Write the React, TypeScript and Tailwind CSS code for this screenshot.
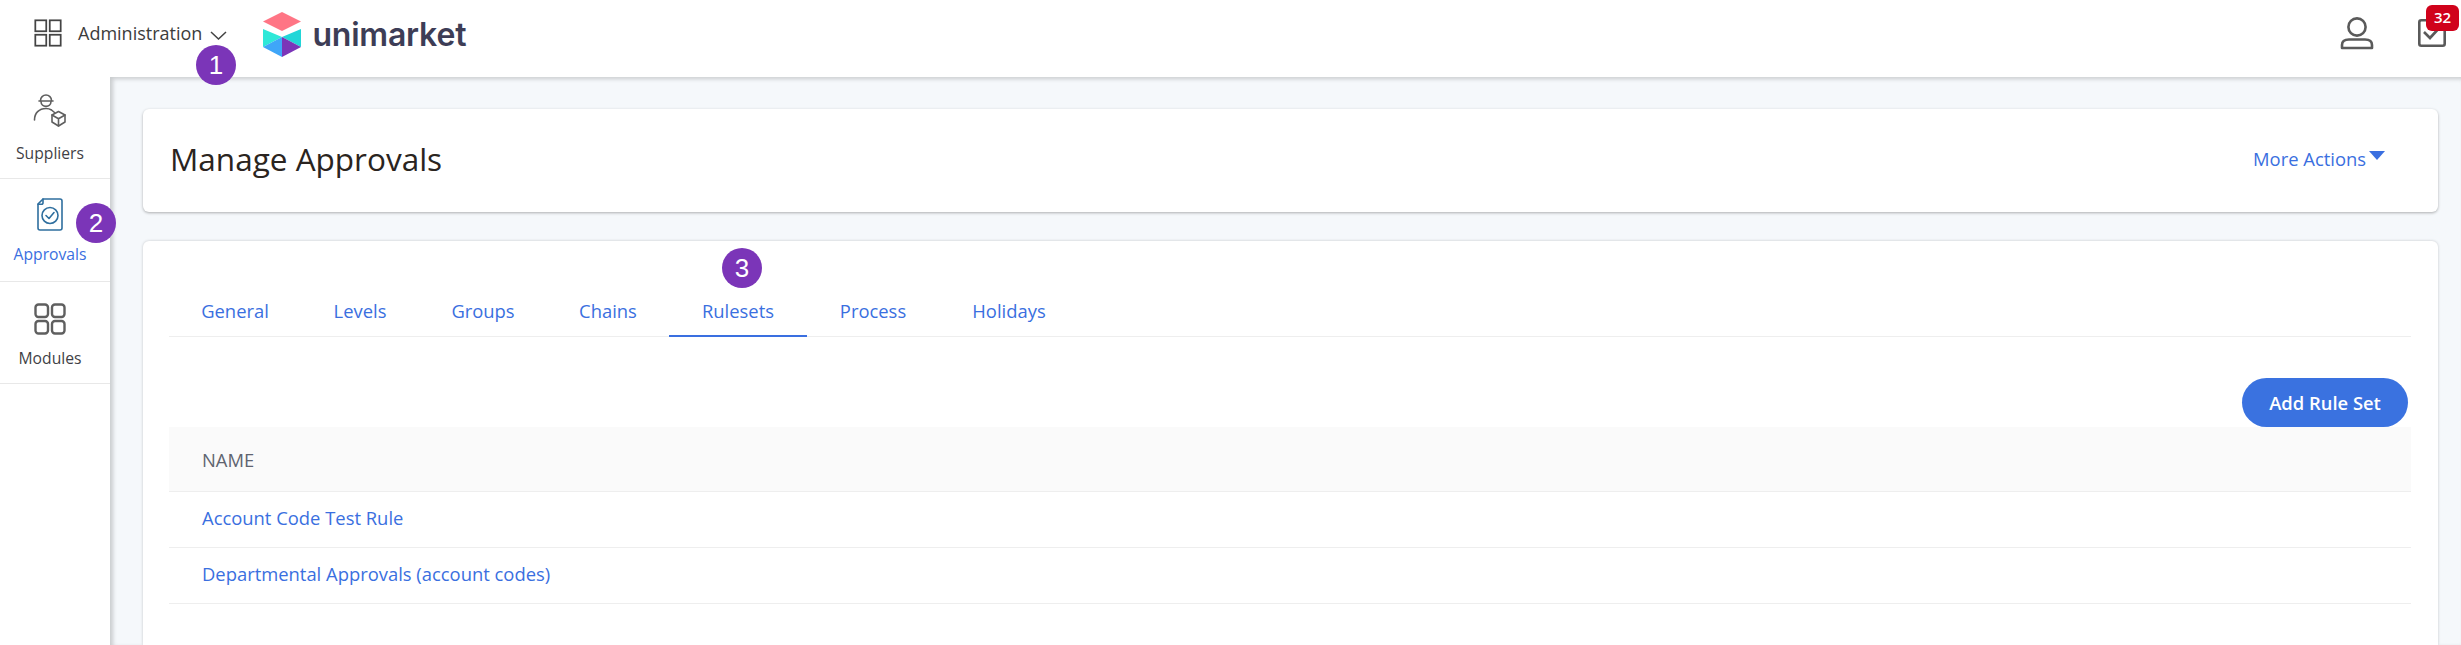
const F = "font-['Open_Sans','Lato',sans-serif]";

function Step({ n, className }: { n: string; className: string }) {
  return (
    <div className={`absolute z-20 flex h-10 w-10 items-center justify-center rounded-full bg-[#7b35b8] font-['Liberation_Sans',sans-serif] text-[26px] leading-none text-white ${className}`}>
      {n}
    </div>
  );
}

function GridIcon({ size, stroke, sw, r }: { size: number; stroke: string; sw: number; r: number }) {
  return (
    <svg width={size} height={size} viewBox="0 0 32 32" fill="none" stroke={stroke} strokeWidth={sw}>
      <rect x="1.5" y="1.5" width="12.5" height="12.5" rx={r} />
      <rect x="18" y="1.5" width="12.5" height="12.5" rx={r} />
      <rect x="1.5" y="18" width="12.5" height="12.5" rx={r} />
      <rect x="18" y="18" width="12.5" height="12.5" rx={r} />
    </svg>
  );
}

function Logo() {
  return (
    <svg width="38" height="45" viewBox="0 0 38 45">
      <path d="M19 0 L38 9.5 L19 19 L0 9.5Z" fill="#ff7585" />
      <path d="M0 17 L19 25 L0 35Z" fill="#2ee8d8" />
      <path d="M38 17 L19 25 L38 35Z" fill="#22d6d8" />
      <path d="M0 35 L19 25 L19 45Z" fill="#3fa6f8" />
      <path d="M38 35 L19 25 L19 45Z" fill="#7b35b8" />
    </svg>
  );
}

function SupplierIcon() {
  return (
    <svg width="34" height="34" viewBox="0 0 34 34" fill="none" stroke="#5f5f5f" strokeWidth="1.6" strokeLinejoin="round" strokeLinecap="round">
      <path d="M7.5 6.5 a5.5 5.5 0 0 1 11 0" />
      <path d="M6 7 H20" />
      <path d="M8 7.5 C8 14 18 14 18 7.5" />
      <path d="M1.5 26 C1.5 19 6 14.5 13 14.5 C15 14.5 17 15 18.5 16 L21.5 18.5" />
      <path d="M25.5 17.5 L32 21 V28 L25.5 32 L19 28 V21Z" />
      <path d="M19 21 L25.5 24.7 L32 21 M25.5 24.7 V32" />
    </svg>
  );
}

function ApprovalIcon() {
  return (
    <svg width="26" height="33" viewBox="0 0 26 33" fill="none" stroke="#2f6f9f" strokeWidth="1.6" strokeLinejoin="round" strokeLinecap="round">
      <path d="M6 1 H23 a2 2 0 0 1 2 2 V30 a2 2 0 0 1 -2 2 H3 a2 2 0 0 1 -2 -2 V6Z" />
      <path d="M6 1 V5 a1.2 1.2 0 0 1 -1.2 1.2 H1" />
      <circle cx="13" cy="17.5" r="8" />
      <path d="M9 17.5 L12 20.5 L17 14.5" />
    </svg>
  );
}

function SideItem({ label, icon, active, h, gap }: { label: string; icon: React.ReactNode; active?: boolean; h: string; gap: string }) {
  return (
    <div className={`flex flex-col items-center border-b border-[#e8e8e8] pr-[10px] ${h}`}>
      <div className="flex h-[34px] items-center justify-center">{icon}</div>
      <div className={`${gap} text-[15.7px] leading-[20px] ${active ? "text-[#3a6fe0]" : "text-[#3f3f46]"}`}>{label}</div>
    </div>
  );
}

const tabs: [string, string][] = [
  ["General", "w-[132px]"],
  ["Levels", "w-[118px]"],
  ["Groups", "w-[128px]"],
  ["Chains", "w-[122px]"],
  ["Rulesets", "w-[138px]"],
  ["Process", "w-[132px]"],
  ["Holidays", "w-[140px]"],
];

export default function App() {
  return (
    <div className={`relative flex h-[645px] w-full flex-col overflow-hidden bg-white ${F}`}>
      <header className="flex h-[77px] shrink-0 items-center pl-[34px] pr-[15px]">
        <div className="mb-[11px] flex items-center">
          <GridIcon size={28} stroke="#444444" sw={2} r={0} />
          <span className="ml-[16px] text-[18px] leading-6 text-[#3c3c3c]">Administration</span>
          <svg className="ml-[8px] mt-[4px]" width="17" height="9" viewBox="0 0 17 9" fill="none" stroke="#444444" strokeWidth="1.5">
            <path d="M1 1 L8.5 8 L16 1" />
          </svg>
        </div>
        <div className="mb-[8px] ml-[36px] flex items-center">
          <Logo />
          <span className="ml-[11px] font-['Inter',sans-serif] text-[32px] font-semibold leading-none tracking-[-0.2px] text-[#3d3d56]">unimarket</span>
        </div>
        <div className="ml-auto mb-[12px] flex items-center">
          <svg width="34" height="34" viewBox="0 0 34 34" fill="none" stroke="#5a5a5a" strokeWidth="2.6">
            <circle cx="17" cy="11" r="8.6" />
            <path d="M2 32 V29 C2 25 5 23.5 9 23.5 H25 C29 23.5 32 25 32 29 V32 H2Z" strokeLinejoin="round" />
          </svg>
          <div className="relative ml-[44px] h-[28px] w-[28px]">
            <svg width="28" height="28" viewBox="0 0 28 28" fill="none" stroke="#5a5a5a" strokeWidth="2.6">
              <rect x="1.3" y="1.3" width="25.4" height="25.4" rx="2" />
              <path d="M6 13 L12 19 L23 7" />
            </svg>
            <div className="absolute left-[8px] top-[-14px] flex h-[26px] w-[33px] items-center justify-center rounded-[6px] bg-[#d0021b] text-[15px] font-semibold leading-none text-white">32</div>
          </div>
        </div>
      </header>

      <div className="flex min-h-0 flex-1">
        <aside className="w-[110px] shrink-0 bg-white">
          <SideItem label="Suppliers" h="h-[102px] pt-[17px]" gap="mt-[15px]" icon={<SupplierIcon />} />
          <SideItem label="Approvals" h="h-[103px] pt-[18px]" gap="mt-[13px]" active icon={<ApprovalIcon />} />
          <SideItem label="Modules" h="h-[102px] pt-[20px]" gap="mt-[12px]" icon={<GridIcon size={32} stroke="#5f5f5f" sw={2.4} r={3} />} />
        </aside>

        <main className="flex min-w-0 flex-1 flex-col bg-[#f5f8fb] pl-[33px] pr-[23px] pt-[32px] shadow-[inset_3px_2px_4px_rgba(0,0,0,0.18)]">
          <section className="flex h-[103px] shrink-0 items-center justify-between rounded-[6px] bg-white pl-[27px] pr-[53px] shadow-[0_1px_3px_rgba(0,0,0,0.3)]">
            <h1 className="mb-[3px] text-[31.5px] font-normal leading-none text-[#2a2420]">Manage Approvals</h1>
            <div className="mb-[4px] flex items-center text-[18.4px] text-[#3a6fe0]">
              More Actions
              <svg className="mb-[6px] ml-[3px]" width="16" height="9" viewBox="0 0 16 9">
                <path d="M0 0 H16 L8 9Z" fill="#3a6fe0" />
              </svg>
            </div>
          </section>

          <section className="mt-[29px] flex-1 rounded-t-[6px] bg-white pl-[26px] pr-[27px] pt-[44px] shadow-[0_0_3px_rgba(0,0,0,0.2)]">
            <nav className="flex h-[52px] border-b border-[#eeeeee]">
              {tabs.map(([t, w]) => (
                <div key={t} className={`${w} h-[52px] pt-[14px] text-center text-[18.4px] leading-6 text-[#3a6fe0] ${t === "Rulesets" ? "border-b-2 border-[#3a6fe0]" : ""}`}>
                  {t}
                </div>
              ))}
            </nav>
            <div className="flex justify-end pr-[3px] pt-[41px]">
              <button className="flex h-[49px] w-[166px] items-center justify-center rounded-full bg-[#3a72e0] text-[18.4px] font-semibold text-white">
                Add Rule Set
              </button>
            </div>
            <div className="flex h-[65px] items-center border-b border-[#eeeeee] bg-[#fafafa] pl-[33px] pt-[2px] text-[18.4px] text-[#5f6470]">NAME</div>
            <div className="flex h-[56px] items-center border-b border-[#eeeeee] pb-[3px] pl-[33px] text-[18.4px] text-[#3a6fe0]">Account Code Test Rule</div>
            <div className="flex h-[56px] items-center border-b border-[#eeeeee] pb-[3px] pl-[33px] text-[18.4px] text-[#3a6fe0]">Departmental Approvals (account codes)</div>
          </section>
        </main>
      </div>

      <Step n="1" className="left-[196px] top-[45px]" />
      <Step n="2" className="left-[76px] top-[203px]" />
      <Step n="3" className="left-[722px] top-[248px]" />
    </div>
  );
}
